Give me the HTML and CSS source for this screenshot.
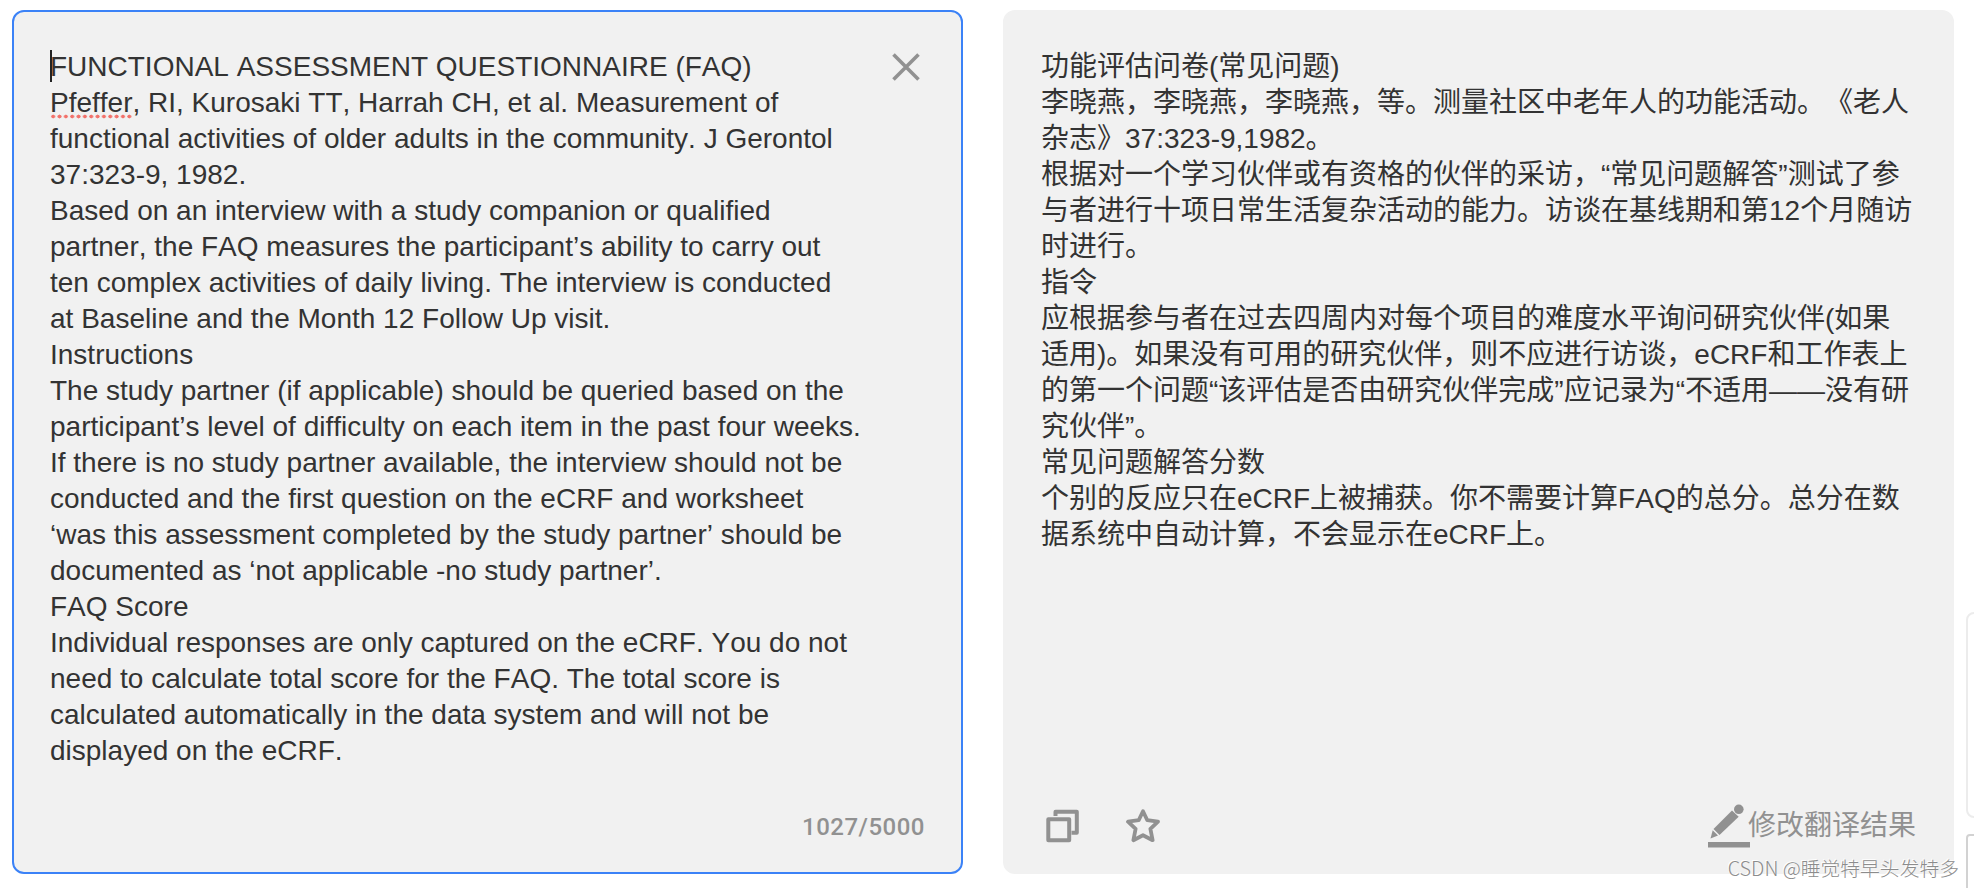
FILE: index.html
```html
<!DOCTYPE html>
<html lang="zh-CN">
<head>
    <meta charset="UTF-8">
    <meta name="viewport" content="width=device-width, initial-scale=1.0">
    <title>翻译</title>
    <link rel="stylesheet" href="styles.css">
</head>
<body>
    <div class="translate">
        <!-- Source text -->
        <div class="panel source">
            <div class="text" lang="en">
                <p class="first">FUNCTIONAL ASSESSMENT QUESTIONNAIRE (FAQ)</p>
                <p><span class="misspelled">Pfeffer</span>, RI, Kurosaki TT, Harrah CH, et al. Measurement of<br>functional activities of older adults in the community. J Gerontol<br>37:323-9, 1982.</p>
                <p>Based on an interview with a study companion or qualified<br>partner, the FAQ measures the participant’s ability to carry out<br>ten complex activities of daily living. The interview is conducted<br>at Baseline and the Month 12 Follow Up visit.</p>
                <p>Instructions</p>
                <p>The study partner (if applicable) should be queried based on the<br>participant’s level of difficulty on each item in the past four weeks.<br>If there is no study partner available, the interview should not be<br>conducted and the first question on the eCRF and worksheet<br>‘was this assessment completed by the study partner’ should be<br>documented as ‘not applicable -no study partner’.</p>
                <p>FAQ Score</p>
                <p>Individual responses are only captured on the eCRF. You do not<br>need to calculate total score for the FAQ. The total score is<br>calculated automatically in the data system and will not be<br>displayed on the eCRF.</p>
            </div>
            <svg class="close" width="28" height="28" viewBox="0 0 28 28">
                <path d="M1.5 1.5L26.5 26.5M26.5 1.5L1.5 26.5" fill="none" stroke="#919191" stroke-width="3.6"/>
            </svg>
            <div class="panel-footer">
                <span class="counter">1027/5000</span>
            </div>
        </div>

        <!-- Translation -->
        <div class="panel target">
            <div class="text">
                <p>功能评估问卷(常见问题)</p>
                <p>李晓燕，李晓燕，李晓燕，等。测量社区中老年人的功能活动。《老人<br>杂志》37:323-9,1982。</p>
                <p>根据对一个学习伙伴或有资格的伙伴的采访，“常见问题解答”测试了参<br>与者进行十项日常生活复杂活动的能力。访谈在基线期和第12个月随访<br>时进行。</p>
                <p>指令</p>
                <p>应根据参与者在过去四周内对每个项目的难度水平询问研究伙伴(如果<br>适用)。如果没有可用的研究伙伴，则不应进行访谈，eCRF和工作表上<br>的第一个问题“该评估是否由研究伙伴完成”应记录为“不适用——没有研<br>究伙伴”。</p>
                <p>常见问题解答分数</p>
                <p>个别的反应只在eCRF上被捕获。你不需要计算FAQ的总分。总分在数<br>据系统中自动计算，不会显示在eCRF上。</p>
            </div>
            <div class="panel-footer">
                <div class="tools">
                    <svg width="34" height="34" viewBox="0 0 34 34" fill="none" stroke="#919191" stroke-width="4" stroke-linejoin="round">
                        <path d="M2.3 10.2H23.2V31.2H2.3Z"/>
                        <path d="M9.5 7V2.7H30.8V23.8H25.5"/>
                    </svg>
                    <svg width="36" height="34" viewBox="0 0 36 34" fill="none" stroke="#919191" stroke-width="3.8" stroke-linejoin="round">
                        <path d="M18 2.2L22.3 11.2L33 12.7L25.4 19.8L27.6 31.2L18 26.2L8.4 31.2L10.6 19.8L3 12.7L13.7 11.2Z"/>
                    </svg>
                </div>
                <div class="edit">
                    <svg width="42" height="46" viewBox="0 0 42 46" fill="#919191">
                        <path d="M24 7.5L30.7 13.8L11.5 32L5.5 26Z"/>
                        <path d="M4.7 27.2L10 32.6L2.5 35.5Z"/>
                        <circle cx="30.8" cy="6.3" r="4.8"/>
                        <path d="M0 39H42V44.5H0Z"/>
                    </svg>
                    <span>修改翻译结果</span>
                </div>
            </div>
        </div>

        <!-- Edges of the side toolbar -->
        <div class="sidebar">
            <div class="side-box"></div>
            <div class="side-box dark"></div>
        </div>
    </div>
    <div class="watermark">CSDN @睡觉特早头发特多</div>
</body>
</html>
```

FILE: styles.css
```css
* {
    box-sizing: border-box;
}
body {
    margin: 0;
    background-color: #fff;
    color: #333;
    font-family: "Liberation Sans", "Noto Sans CJK SC", sans-serif;
    overflow: hidden;
}
.translate {
    display: flex;
    height: 888px;
    padding: 10px 0 0 12px;
}
.panel {
    position: relative;
    display: flex;
    flex-direction: column;
    justify-content: space-between;
    flex: none;
    width: 951px;
    height: 864px;
    padding: 37px 36px 21px;
    background-color: #f1f1f1;
    border: 2px solid #f1f1f1;
    border-radius: 12px;
}
.source {
    margin-right: 40px;
    border-color: #3b82f7;
}
.text {
    font-size: 28px;
    line-height: 36px;
    font-kerning: none;
    text-spacing-trim: space-all;
    white-space: nowrap;
}
.text p {
    margin: 0;
}
.first {
    position: relative;
}
/* text cursor */
.first::before {
    content: "";
    position: absolute;
    left: 0;
    top: 1px;
    width: 2px;
    height: 32px;
    background-color: #222;
}
.misspelled {
    padding-bottom: 1px;
    background: radial-gradient(circle, #f2726b 1.7px, transparent 2.2px) 0 100% / 6.35px 5px repeat-x;
}
.close {
    position: absolute;
    right: 41px;
    top: 41px;
}
.panel-footer {
    display: flex;
    justify-content: space-between;
    align-items: center;
    height: 50px;
    color: #919191;
}
.source .panel-footer {
    justify-content: flex-end;
    padding-top: 2px;
}
.counter {
    font-family: Roboto, sans-serif;
    font-size: 24px;
    font-weight: 500;
    letter-spacing: 0.5px;
}
.tools {
    display: flex;
    gap: 45px;
    padding-left: 5px;
}
.edit {
    display: flex;
    align-items: center;
    font-size: 28px;
    line-height: 36px;
}
.edit svg {
    margin-right: -2px;
}
.sidebar {
    flex: none;
    width: 8px;
    margin-left: 12px;
    padding-top: 602px;
    overflow: hidden;
}
.side-box {
    width: 80px;
    height: 206px;
    border: 2px solid #ececec;
    border-radius: 8px;
}
.side-box.dark {
    margin-top: 16px;
    border-color: #d2d2d2;
    border-radius: 4px;
}
.watermark {
    position: absolute;
    right: 15px;
    bottom: 6px;
    color: #8c8c8c;
    font-family: "Noto Sans CJK SC", sans-serif;
    font-size: 19.8px;
    font-weight: 300;
    line-height: 28px;
    text-shadow: -1px -1px 0 #fff;
    white-space: nowrap;
}
```
